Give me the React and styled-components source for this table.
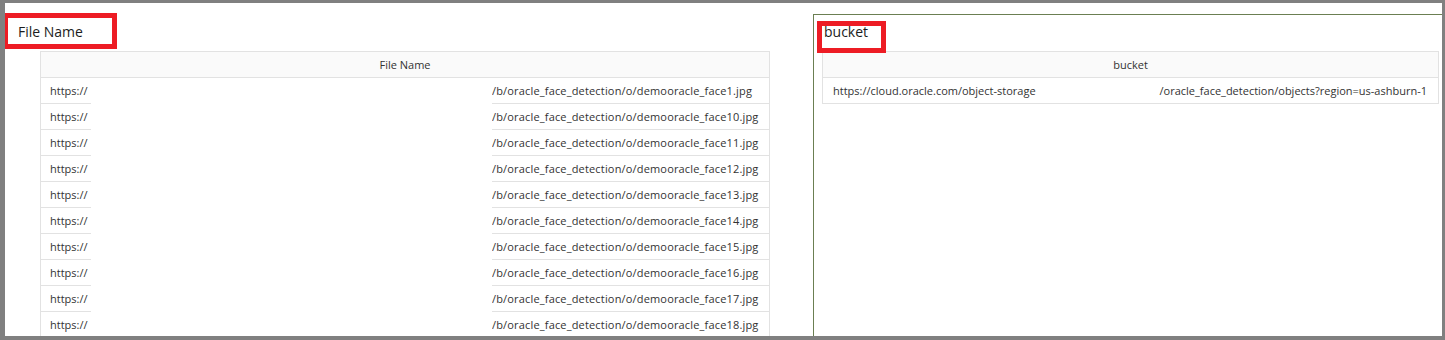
import React from 'react';
import styled, {createGlobalStyle} from 'styled-components';

const Global = createGlobalStyle`
    body {
        margin: 0;
        background: #fff;
        font-family: "Open Sans", "Liberation Sans", sans-serif;
    }
`;

const Frame = styled.div`
    box-sizing: border-box;
    width: 1445px;
    height: 340px;
    border-style: solid;
    border-color: #808080;
    border-width: 3px 3px 4px 5px;
    background: #fff;
    overflow: hidden;
    display: flex;
    align-items: flex-start;
`;

const Panel = styled.section`
    box-sizing: border-box;
    flex: ${p => (p.$framed ? '1' : '0 0 808px')};
    align-self: stretch;
    margin-top: ${p => (p.$framed ? '11px' : '0')};
    padding-top: ${p => (p.$framed ? '7px' : '19px')};
    border-top: ${p => (p.$framed ? '1px solid #6b7f52' : 'none')};
    border-left: ${p => (p.$framed ? '1px solid #6b7f52' : 'none')};
`;

// the red boxes are annotations drawn over the titles
const Title = styled.div`
    position: relative;
    width: max-content;
    margin-left: ${p => p.$indent}px;
    font-size: 14px;
    line-height: 20px;
    color: #1c1c1c;

    &::after {
        content: '';
        position: absolute;
        box-sizing: border-box;
        left: ${p => p.$mark[0]}px;
        top: ${p => p.$mark[1]}px;
        width: ${p => p.$mark[2]}px;
        height: ${p => p.$mark[3]}px;
        border: 5px solid #ed1c24;
    }
`;

const Table = styled.div`
    box-sizing: border-box;
    width: ${p => p.$width}px;
    margin: 9px 0 0 ${p => p.$indent}px;
    font-size: 11px;
    color: #333;
`;

const Head = styled.div`
    height: 25px;
    line-height: 25px;
    text-align: center;
    background: #fafafa;
    border: 1px solid #e2e2e2;
`;

const Row = styled.div`
    display: grid;
    grid-template-columns: ${p => p.$cols};
    height: 26px;
    line-height: 25px;
`;

const Cell = styled.div`
    box-sizing: border-box;
    overflow: hidden;
    white-space: nowrap;
    padding: ${p => p.$pad || '0'};
    letter-spacing: ${p => (p.$last ? '0.17px' : 'normal')};
    border-bottom: ${p => (p.$blank ? 'none' : '1px solid #e2e2e2')};
    border-left: ${p => (p.$first ? '1px solid #e2e2e2' : 'none')};
    border-right: ${p => (p.$last ? '1px solid #e2e2e2' : 'none')};
`;

const Url = styled.div`
    display: flex;
    justify-content: space-between;
    white-space: nowrap;
    height: 26px;
    line-height: 25px;
    box-sizing: border-box;
    padding: 0 11px 0 10px;
    border: 1px solid #e2e2e2;
    border-top: none;
`;

const files = ['1', '10', '11', '12', '13', '14', '15', '16', '17', '18'];

const App = () => (
    <>
        <Global />
        <Frame>
            <Panel>
                <Title $indent={13} $mark={[-15, -9, 114, 36]}>File Name</Title>
                <Table $width={730} $indent={35}>
                    <Head>File Name</Head>
                    {files.map(n => (
                        <Row key={n} $cols="51px 401px 278px">
                            <Cell $first $pad="0 0 0 9px">https://</Cell>
                            <Cell $blank />
                            <Cell $last>/b/oracle_face_detection/o/demooracle_face{n}.jpg</Cell>
                        </Row>
                    ))}
                </Table>
            </Panel>
            <Panel $framed>
                <Title $indent={10} $mark={[-7, -1, 69, 32]}>bucket</Title>
                <Table $width={617} $indent={8}>
                    <Head>bucket</Head>
                    <Url>
                        <span>https://cloud.oracle.com/object-storage</span>
                        <span>/oracle_face_detection/objects?region=us-ashburn-1</span>
                    </Url>
                </Table>
            </Panel>
        </Frame>
    </>
);

export default App;
